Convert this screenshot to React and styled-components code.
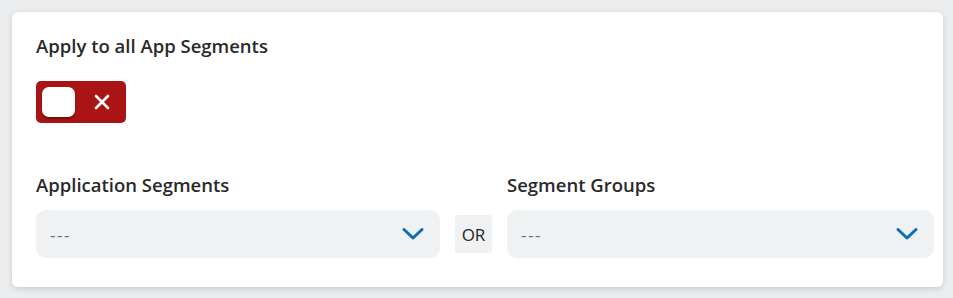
import React from 'react'
import styled, { createGlobalStyle } from 'styled-components'

const Global = createGlobalStyle`
  html, body {
    margin: 0;
    background: #ecedef;
  }
  body {
    font-family: "Open Sans", "Noto Sans", sans-serif;
    color: #242424;
  }
`

const Page = styled.div`
  padding: 12px 10px 10px 12px;
`

const Card = styled.section`
  background: #ffffff;
  border-radius: 6px;
  box-shadow: 0 2px 6px rgba(0, 0, 0, 0.14);
  padding: 22px 9px 29px 24px;
  display: flex;
  flex-direction: column;
`

const Label = styled.div`
  font-size: 18.5px;
  font-weight: 600;
  line-height: 24px;
  color: #2a2a2a;
`

const Toggle = styled.button`
  margin-top: 23px;
  width: 90px;
  height: 42px;
  border: none;
  border-radius: 5px;
  background: #ab1414;
  padding: 6px;
  display: flex;
  align-items: center;
  cursor: pointer;
`

const Knob = styled.span`
  width: 33px;
  height: 30px;
  border-radius: 7px;
  background: #ffffff;
  box-shadow: 0 2px 2px rgba(0, 0, 0, 0.35);
`

const Cross = styled.svg`
  margin-left: 19px;
`

const FieldRow = styled.div`
  margin-top: 50px;
  display: grid;
  grid-template-columns: 404px 37px 1fr;
  column-gap: 15px;
  align-items: end;
`

const Field = styled.div`
  display: flex;
  flex-direction: column;
  gap: 13px;
`

const Select = styled.div`
  height: 48px;
  border-radius: 10px;
  background: #f0f1f3;
  display: flex;
  align-items: center;
  justify-content: space-between;
  padding: 0 16px 0 14px;
  font-size: 17px;
  color: #6e6e6e;
  cursor: pointer;
`

const Dashes = styled.span`
  letter-spacing: 1.5px;
`

const Or = styled.div`
  height: 38px;
  margin-bottom: 5px;
  border-radius: 3px;
  background: #f0f1f3;
  display: flex;
  align-items: center;
  justify-content: center;
  font-size: 17px;
  color: #242424;
`

const Chevron = () => (
  <svg width="22" height="14" viewBox="0 0 22 14">
    <path d="M2 2.5 L11 11 L20 2.5" fill="none" stroke="#0a6fb7" strokeWidth="3" strokeLinecap="round" strokeLinejoin="round" />
  </svg>
)

const Dropdown = ({ label }) => (
  <Field>
    <Label>{label}</Label>
    <Select>
      <Dashes>---</Dashes>
      <Chevron />
    </Select>
  </Field>
)

const App = () => (
  <Page>
    <Global />
    <Card>
      <Label>Apply to all App Segments</Label>
      <Toggle aria-label="toggle">
        <Knob />
        <Cross width="16" height="16" viewBox="0 0 16 16">
          <path d="M2 2 L14 14 M14 2 L2 14" stroke="#ffffff" strokeWidth="2.6" strokeLinecap="round" />
        </Cross>
      </Toggle>
      <FieldRow>
        <Dropdown label="Application Segments" />
        <Or>OR</Or>
        <Dropdown label="Segment Groups" />
      </FieldRow>
    </Card>
  </Page>
)

export default App
